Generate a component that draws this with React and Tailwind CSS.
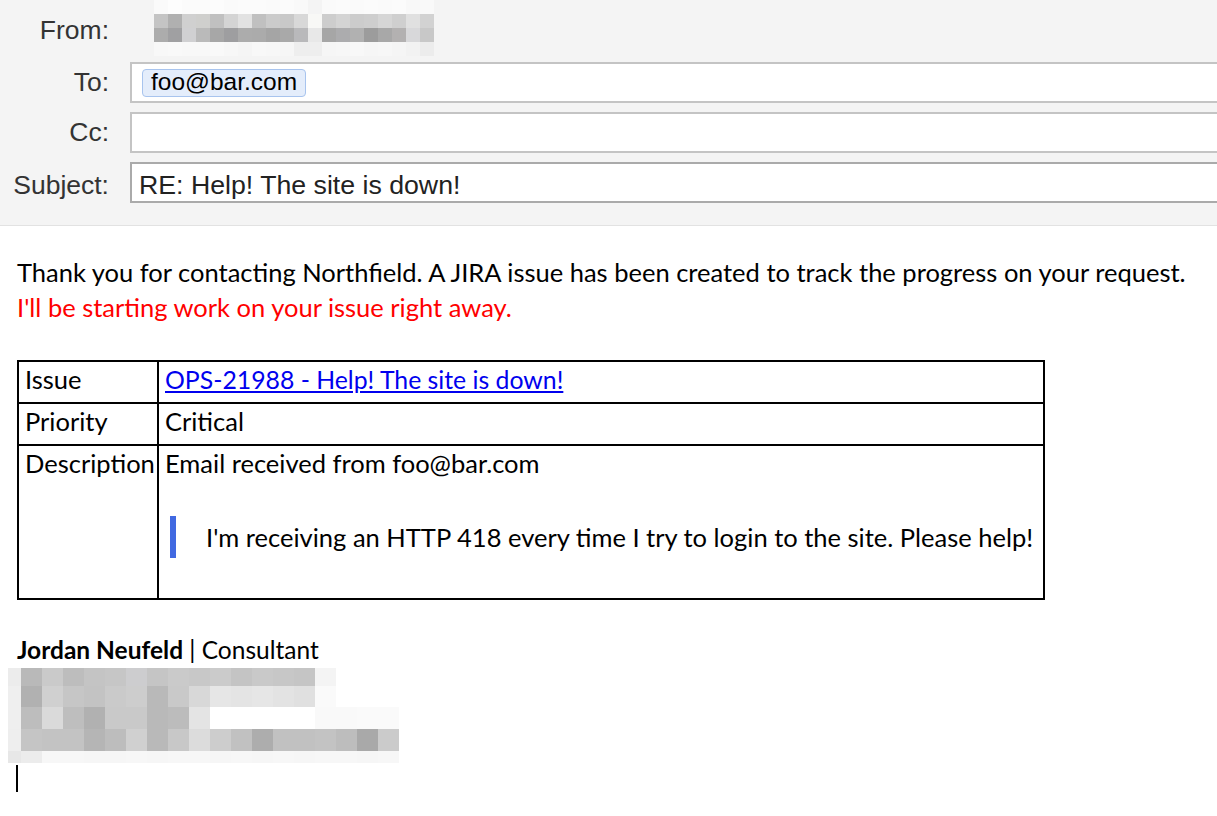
import React from "react";

// blurred "From" address, 14px mosaic
const fromRows = [
  ["bg-[#fafafa]","bg-[#fdfdfd]","bg-[#fbfbfb]","bg-[#fbfbfb]","bg-[#fcfcfc]","bg-[#fafafa]","bg-[#fbfbfb]","bg-[#fbfbfb]","bg-[#fafafa]","bg-[#fbfbfb]","bg-[#f9f9f9]","bg-[#f4f4f4]","bg-[#fafafa]","bg-[#fbfbfb]","bg-[#fafafa]","bg-[#fbfbfb]","bg-[#fafafa]","bg-[#fbfbfb]","bg-[#f8f8f8]","bg-[#f9f9f9]"],
  ["bg-[#c4c4c4]","bg-[#b0b0b0]","bg-[#d0d0d0]","bg-[#cfcfcd]","bg-[#c0c0c0]","bg-[#d4d4d4]","bg-[#e2e2e2]","bg-[#c0c0c0]","bg-[#cbcbcb]","bg-[#c8c8c8]","bg-[#d8d8d8]","bg-[#f8f8f6]","bg-[#cdcdcd]","bg-[#d4d4d4]","bg-[#cccccc]","bg-[#cecece]","bg-[#d6d6d6]","bg-[#cfcfcf]","bg-[#e0e0e0]","bg-[#d2d2d2]"],
  ["bg-[#acacac]","bg-[#a0a0a2]","bg-[#d0d0d2]","bg-[#bababa]","bg-[#a7a7a7]","bg-[#9e9ea0]","bg-[#acacac]","bg-[#ababab]","bg-[#a5a5a5]","bg-[#a9a9a9]","bg-[#b9b9bb]","bg-[#e8e8e8]","bg-[#a6a6a6]","bg-[#acacae]","bg-[#b1b1b1]","bg-[#9c9c9c]","bg-[#a8a8a8]","bg-[#b3b1b1]","bg-[#d8d8da]","bg-[#c8c8c8]"],
  ["bg-[#f8f8f8]","bg-[#f9f9f9]","bg-[#f8f8f8]","bg-[#f8f8f8]","bg-[#f9f9f9]","bg-[#f7f7f7]","bg-[#f5f5f5]","bg-[#f8f8f8]","bg-[#f7f7f7]","bg-[#f6f6f6]","bg-[#eeeeee]","bg-[#eeeeee]","bg-[#f6f6f6]","bg-[#f7f7f7]","bg-[#f8f8f8]","bg-[#f6f6f6]","bg-[#f7f7f7]","bg-[#f5f5f5]","bg-[#f2f2f2]","bg-[#ececec]"],
];

// blurred signature details, 21px mosaic
const sigRows = [
  { h: "h-[18px]", first: "bg-[#ececec]", cells: ["bg-[#b9b9b9]","bg-[#cacaca]","bg-[#bdbdbd]","bg-[#c4c4c4]","bg-[#c6c6c6]","bg-[#cdcdcf]","bg-[#c5c5c5]","bg-[#cacaca]","bg-[#c8c8c8]","bg-[#cbcbcb]","bg-[#c4c4c4]","bg-[#c9c9c9]","bg-[#c7c7c7]","bg-[#c5c5c5]","bg-[#f4f4f4]","bg-white","bg-white","bg-white"] },
  { h: "h-[21px]", first: "bg-[#efefef]", cells: ["bg-[#b1b1b1]","bg-[#d0d0d0]","bg-[#c6c6c6]","bg-[#c3c3c3]","bg-[#cacaca]","bg-[#cdcdcd]","bg-[#b9b9b9]","bg-[#c9c9c9]","bg-[#d8d8d8]","bg-[#e6e6e6]","bg-[#e4e4e4]","bg-[#e6e6e6]","bg-[#e3e3e3]","bg-[#e0e0e0]","bg-[#fafafa]","bg-white","bg-white","bg-white"] },
  { h: "h-[22px]", first: "bg-[#efefef]", cells: ["bg-[#bdbdbd]","bg-[#dadada]","bg-[#bebebe]","bg-[#b1b1b1]","bg-[#c9c9c9]","bg-[#c9c9c9]","bg-[#b9b9b9]","bg-[#bcbcbc]","bg-[#e4e4e4]","bg-white","bg-white","bg-white","bg-white","bg-white","bg-[#f9f9f9]","bg-[#f9f9f9]","bg-[#fafafa]","bg-[#fafafa]"] },
  { h: "h-[22px]", first: "bg-[#eeeeee]", cells: ["bg-[#c5c5c5]","bg-[#c3c3c3]","bg-[#c3c3c3]","bg-[#b5b5b5]","bg-[#bdbdbd]","bg-[#d0d0d0]","bg-[#b9b9b9]","bg-[#c8c8c8]","bg-[#dcdcdc]","bg-[#cdcdcd]","bg-[#c1c1c1]","bg-[#adadad]","bg-[#c1c1c1]","bg-[#c1c1c1]","bg-[#c3c3c3]","bg-[#bdbdbd]","bg-[#a9a9a9]","bg-[#cbcbcb]"] },
  { h: "h-[12px]", first: "bg-[#e7e7e7]", cells: ["bg-[#ececec]","bg-[#f7f7f7]","bg-[#f7f7f7]","bg-[#f6f6f6]","bg-[#f6f6f6]","bg-[#f7f7f7]","bg-[#f6f6f6]","bg-[#f7f7f7]","bg-[#f7f7f7]","bg-[#f6f6f6]","bg-[#f7f7f7]","bg-[#f6f6f6]","bg-[#f7f7f7]","bg-[#f6f6f6]","bg-[#f7f7f7]","bg-[#f7f7f7]","bg-[#f6f6f6]","bg-[#f7f7f7]"] },
];

const HeaderRow = ({ label, children, dark, low }) => (
  <div className="flex items-center h-[41px]">
    <div className={"w-[109px] shrink-0 text-right " + (low ? "pt-[6px]" : "")}>{label}</div>
    <div
      className={
        "ml-[21px] flex-1 h-full bg-white border-y-2 border-l-2 flex items-center " +
        (dark ? "border-[#aaaaaa]" : "border-[#c4c4c4]")
      }
    >
      {children}
    </div>
  </div>
);

const Row = ({ label, children, last }) => (
  <div className={"flex " + (last ? "" : "border-b-2 border-black")}>
    <div className="w-[140px] shrink-0 border-r-2 border-black px-[6px]">{label}</div>
    <div className="flex-1 px-[6px]">{children}</div>
  </div>
);

export default function App() {
  return (
    <div className="w-[1217px] h-[816px] overflow-hidden bg-white">
      {/* compose header */}
      <div className="bg-[#f4f4f4] border-b border-[#e2e2e2] pb-[22px] flex flex-col gap-[9px] text-[26.5px] text-[#333333] font-['Liberation_Sans',Arial,sans-serif]">
        <div className="flex items-start h-[53px]">
          <div className="w-[109px] shrink-0 text-right leading-[41px] mt-[10px]">From:</div>
          <div className="ml-[45px] flex flex-col">
            {fromRows.map((r, i) => (
              <div key={i} className="flex h-[14px]">
                {r.map((c, j) => (
                  <div key={j} className={"w-[14px] " + c} />
                ))}
              </div>
            ))}
          </div>
        </div>
        <HeaderRow label="To:">
          <span className="ml-[10px] h-[28px] flex items-center px-[8px] rounded-[4px] bg-[#e4edfb] border border-[#a8c4ee] text-[24.5px] text-black">
            foo@bar.com
          </span>
        </HeaderRow>
        <HeaderRow label="Cc:" />
        <HeaderRow label="Subject:" dark low>
          <span className="pl-[7px] pt-[6px] text-[26.7px] text-[#222222]">RE: Help! The site is down!</span>
        </HeaderRow>
      </div>

      {/* message body */}
      <div className="px-[17px] pt-[29px] text-[25.5px] leading-[35px] text-black font-['Lato','Noto_Sans',sans-serif]">
        <p>Thank you for contacting Northfield. A JIRA issue has been created to track the progress on your request.</p>
        <p className="text-[#ff0000]">I'll be starting work on your issue right away.</p>

        <div className="mt-[35px] w-[1028px] border-2 border-black">
          <Row label="Issue">
            <div className="h-[40px]">
              <a href="#" className="text-[#0000ee] underline text-[24.8px]">OPS-21988 - Help! The site is down!</a>
            </div>
          </Row>
          <Row label="Priority">
            <div className="h-[40px]">Critical</div>
          </Row>
          <Row label="Description" last>
            <div className="h-[152px]">
              <p>Email received from foo@bar.com</p>
              <blockquote className="mt-[35px] ml-[5px] border-l-[6px] border-[#4169e1] pl-[30px] py-[3px] leading-[36px]">
                I'm receiving an HTTP 418 every time I try to login to the site. Please help!
              </blockquote>
            </div>
          </Row>
        </div>

        {/* signature */}
        <div className="mt-[36px] text-[24.5px] leading-[28px]">
          <span className="font-bold">Jordan Neufeld</span> | Consultant
        </div>
      </div>
      <div className="ml-[8px] mt-[4px] flex flex-col">
        {sigRows.map((r, i) => (
          <div key={i} className={"flex " + r.h}>
            <div className={"w-[13px] " + r.first} />
            {r.cells.map((c, j) => (
              <div key={j} className={"w-[21px] " + c} />
            ))}
          </div>
        ))}
      </div>
      <div className="ml-[16px] mt-[2px] w-[2px] h-[27px] bg-black" />
    </div>
  );
}
